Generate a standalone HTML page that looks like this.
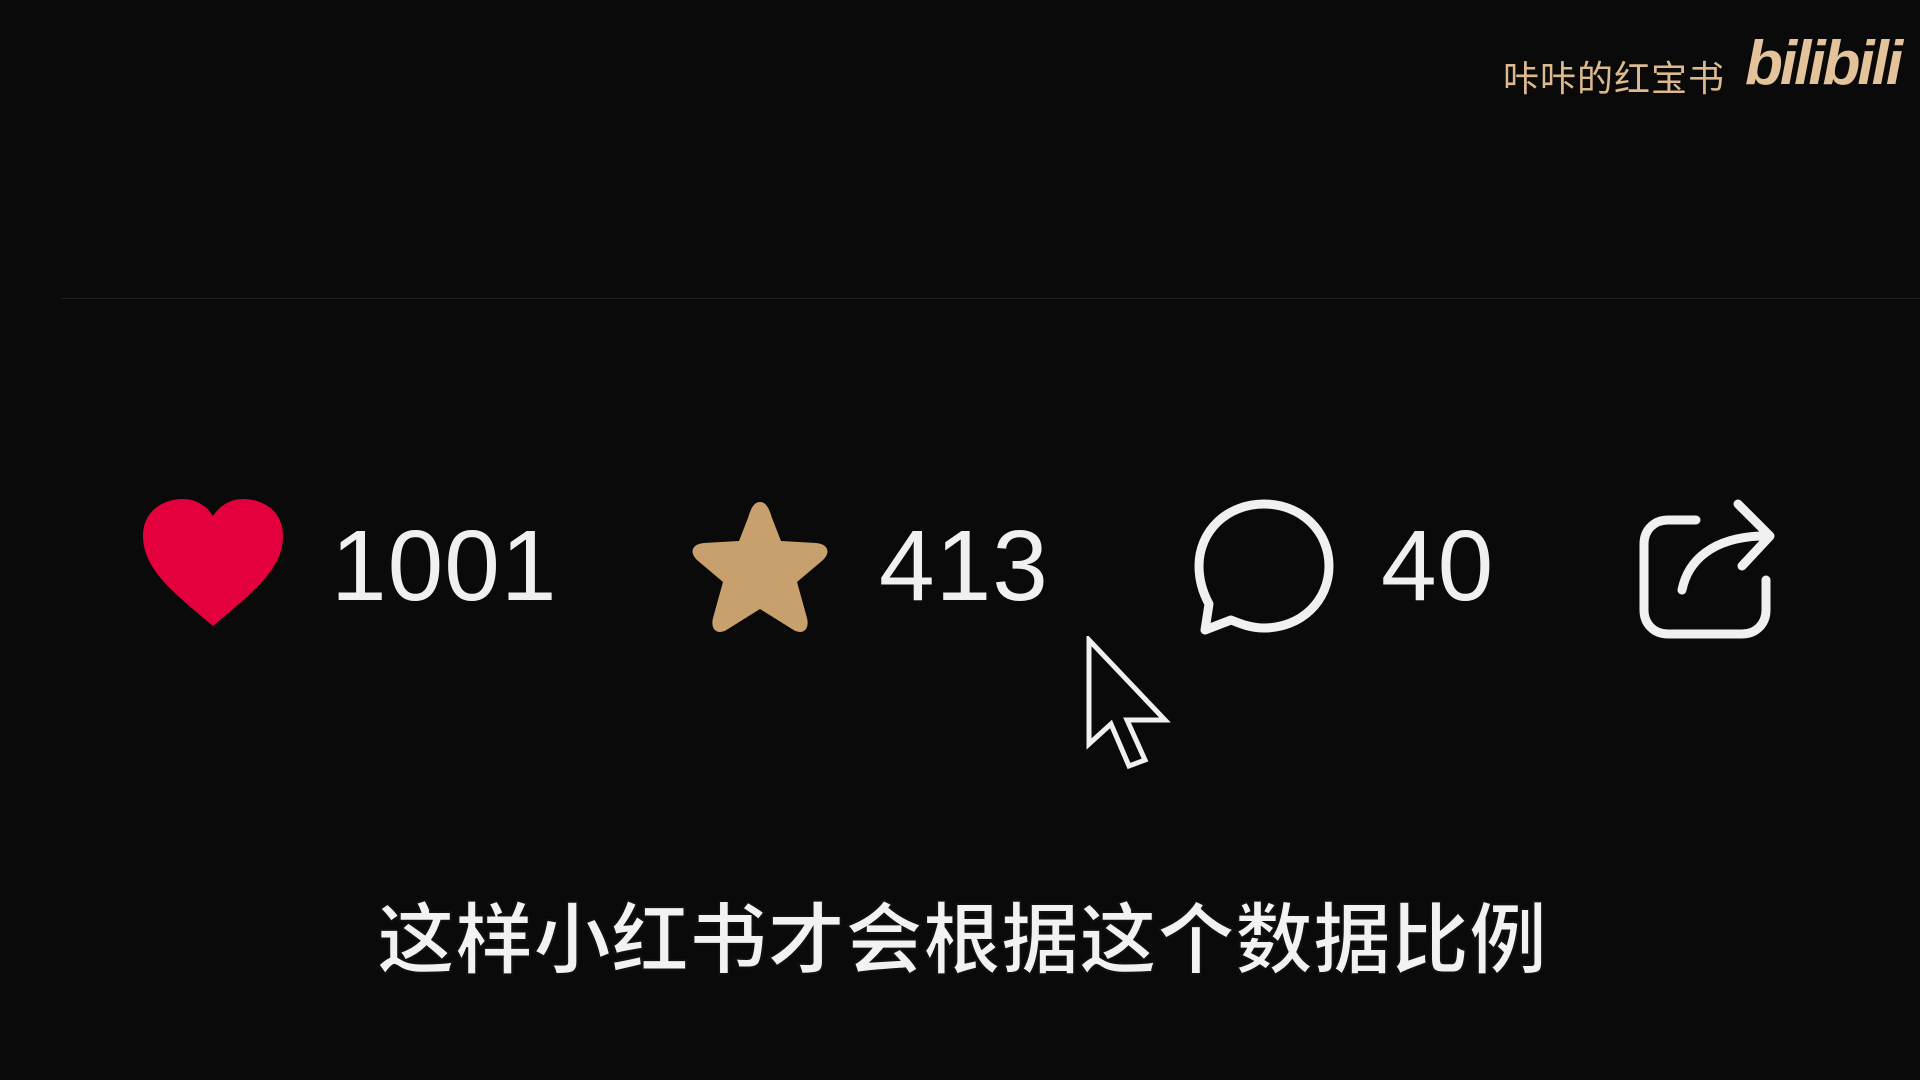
<!DOCTYPE html>
<html><head><meta charset="utf-8"><style>
html,body{margin:0;padding:0;background:#0a0a0a;width:1920px;height:1080px;overflow:hidden;position:relative;font-family:"Liberation Sans","Noto Sans CJK SC",sans-serif}
.a{position:absolute}
.num{position:absolute;color:#f0f0f0;font-size:100px;line-height:1;top:516px;letter-spacing:1px}
</style></head><body>
<div class="a" style="left:1503px;top:50px;font-size:36px;color:#dcb98e;letter-spacing:1px;font-family:'Noto Sans CJK SC',sans-serif">咔咔的红宝书</div>
<div class="a" style="left:1745px;top:28px;font-size:62px;color:#e4c39a;font-weight:bold;font-style:italic;letter-spacing:-3px;font-family:'Liberation Sans',sans-serif">bilibili</div>
<div class="a" style="left:61px;top:298px;width:1859px;height:1px;background:#222018"></div>

<svg class="a" style="left:138px;top:496px" width="150" height="135" viewBox="0 0 150 135">
<path d="M75 130 C40 100 5 75 5 40 C5 15 25 3 45 3 C60 3 70 12 75 20 C80 12 90 3 105 3 C125 3 145 15 145 40 C145 75 110 100 75 130 Z" fill="#e3003c"/></svg>
<div class="num" style="left:331px">1001</div>

<svg class="a" style="left:686px;top:496px" width="148" height="142" viewBox="0 0 148 142">
<path d="M74 6 C80 6 83 12 86 22 L95 45 L130 47 C142 48 145 56 137 64 L111 86 L121 122 C124 134 116 140 106 133 L74 113 L42 133 C32 140 24 134 27 122 L37 86 L11 64 C3 56 6 48 18 47 L53 45 L62 22 C65 12 68 6 74 6 Z" fill="#c8a06d"/></svg>
<div class="num" style="left:879px">413</div>

<svg class="a" style="left:1191px;top:496px" width="146" height="142" viewBox="0 0 146 142">
<path d="M73 8 C110 8 138 35 138 70 C138 105 110 132 73 132 C60 132 50 128 40 124 L14 134 L18 108 C12 97 8 84 8 70 C8 35 36 8 73 8 Z" fill="none" stroke="#f0f0f0" stroke-width="9" stroke-linejoin="round"/></svg>
<div class="num" style="left:1381px">40</div>

<svg class="a" style="left:1638px;top:490px" width="142" height="150" viewBox="0 0 142 150">
<path d="M58 30 L30 30 C16 30 6 40 6 54 L6 120 C6 134 16 144 30 144 L104 144 C118 144 128 134 128 120 L128 90" fill="none" stroke="#f0f0f0" stroke-width="9" stroke-linecap="round"/>
<path d="M44 100 C50 70 75 48 122 46 M100 14 L132 46 L104 76" fill="none" stroke="#f0f0f0" stroke-width="9" stroke-linecap="round" stroke-linejoin="round"/></svg>

<svg class="a" style="left:1085px;top:636px" width="90" height="138" viewBox="0 0 90 138">
<path d="M4 4 L4 108 L26 88 L44 130 L60 124 L42 84 L80 84 Z" fill="#0a0a0a" stroke="#f0f0f0" stroke-width="5" stroke-linejoin="miter"/></svg>

<div class="a" style="left:377px;top:878px;font-size:78px;font-weight:bold;color:#f2f2f2;letter-spacing:0px;white-space:nowrap;font-family:'Noto Sans CJK SC',sans-serif;-webkit-text-stroke:2px #111">这样小红书才会根据这个数据比例</div>
</body></html>
